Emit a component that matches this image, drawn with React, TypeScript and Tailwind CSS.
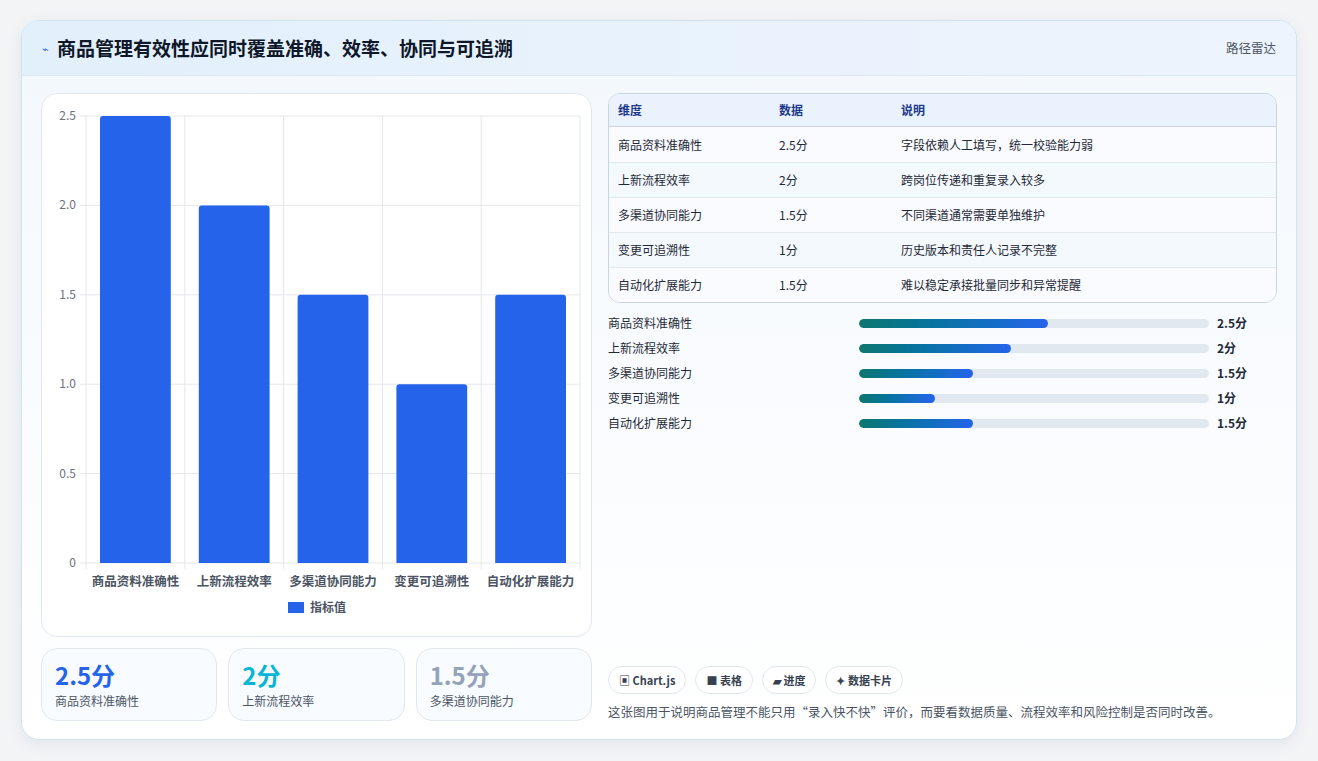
import React from "react";

const data = [
  { name: "商品资料准确性", v: 2.5, s: "2.5分", note: "字段依赖人工填写，统一校验能力弱" },
  { name: "上新流程效率", v: 2, s: "2分", note: "跨岗位传递和重复录入较多" },
  { name: "多渠道协同能力", v: 1.5, s: "1.5分", note: "不同渠道通常需要单独维护" },
  { name: "变更可追溯性", v: 1, s: "1分", note: "历史版本和责任人记录不完整" },
  { name: "自动化扩展能力", v: 1.5, s: "1.5分", note: "难以稳定承接批量同步和异常提醒" },
];

const font = { fontFamily: '"Noto Sans CJK SC", "Noto Sans", sans-serif' };

function Chart() {
  const x0 = 44, w = 494, top = 22, bot = 469;
  const cw = w / 5;
  const ticks = [0, 0.5, 1, 1.5, 2, 2.5];
  const y = (v: number) => bot - (v / 2.5) * (bot - top);
  return (
    <svg width="550" height="543" className="block">
      {ticks.map((t) => (
        <g key={t}>
          <line x1={x0 - 6} x2={x0 + w} y1={y(t)} y2={y(t)} stroke="#e5e7eb" />
          <text x={x0 - 10} y={y(t) + 4} textAnchor="end" fontSize="12" fill="#6b7280">{t === 0 ? "0" : t.toFixed(1)}</text>
        </g>
      ))}
      {[0, 1, 2, 3, 4, 5].map((i) => (
        <line key={i} x1={x0 + i * cw} x2={x0 + i * cw} y1={top} y2={bot + 6} stroke="#e5e7eb" />
      ))}
      {data.map((d, i) => (
        <g key={d.name}>
          <path
            d={`M${x0 + i * cw + 14} ${bot} V${y(d.v) + 3} q0 -3 3 -3 H${x0 + i * cw + cw - 17} q3 0 3 3 V${bot} Z`}
            fill="#2563eb"
          />
          <text x={x0 + i * cw + cw / 2} y={bot + 23} textAnchor="middle" fontSize="12.5" fontWeight="600" fill="#4b5563">{d.name}</text>
        </g>
      ))}
      <rect x="246" y="508" width="16" height="11" fill="#2563eb" />
      <text x="268" y="518" fontSize="12" fontWeight="600" fill="#4b5563">指标值</text>
    </svg>
  );
}

export default function App() {
  return (
    <div className="min-h-screen bg-[#f3f4f6] pt-5 px-[21px] pb-5" style={font}>
      <div className="rounded-[18px] border border-[#cfe3f0] bg-gradient-to-b from-[#f3f8fd] to-white overflow-hidden shadow-[0_4px_16px_rgba(30,64,120,0.08)]">
        <div className="h-[55px] flex items-center justify-between px-5 bg-gradient-to-r from-[#e2f0fc] to-[#eef4fd] border-b border-[#dbe8f4]">
          <div className="flex items-center gap-2">
            <span className="text-[#2563eb] text-[11px]">⌁</span>
            <h1 className="text-[19px] font-bold text-[#0f172a]">商品管理有效性应同时覆盖准确、效率、协同与可追溯</h1>
          </div>
          <span className="text-[12.5px] text-[#4b5563]">路径雷达</span>
        </div>
        <div className="flex gap-4 px-[19px] pt-[17px] pb-[18px]">
          <div className="w-[551px] flex flex-col gap-[11px]">
            <div className="h-[544px] rounded-2xl border border-[#e2e8f0] bg-white overflow-hidden">
              <Chart />
            </div>
            <div className="grid grid-cols-3 gap-[11px]">
              {[
                ["2.5分", "商品资料准确性", "text-[#2563eb]"],
                ["2分", "上新流程效率", "text-[#06b6d4]"],
                ["1.5分", "多渠道协同能力", "text-[#94a3b8]"],
              ].map(([a, b, c]) => (
                <div key={b} className="h-[73px] rounded-2xl border border-[#e2e8f0] bg-[#f8fbff] px-[13px] pt-[10px]">
                  <div className={`text-[24px] font-bold leading-8 ${c}`}>{a}</div>
                  <div className="text-[12px] text-[#4b5563] mt-[1px]">{b}</div>
                </div>
              ))}
            </div>
          </div>
          <div className="flex-1 flex flex-col">
            <div className="rounded-xl border border-[#cbd5e1] overflow-hidden bg-[#f8fbfe]">
              <div className="h-[33px] flex items-center text-[12px] font-bold text-[#1e3a8a] bg-[#eaf3fd] border-b border-[#cbd5e1] px-[9px]">
                <span className="w-[161px]">维度</span>
                <span className="w-[122px]">数据</span>
                <span>说明</span>
              </div>
              {data.map((d, i) => (
                <div key={d.name} className={`h-[35px] flex items-center text-[12px] text-[#1f2937] px-[9px] ${i ? "border-t border-[#e2e8f0]" : ""} ${i % 2 ? "bg-[#f4f9fd]" : "bg-[#f9fbfe]"}`}>
                  <span className="w-[161px]">{d.name}</span>
                  <span className="w-[122px]">{d.s}</span>
                  <span>{d.note}</span>
                </div>
              ))}
            </div>
            <div className="flex flex-col gap-[7px] mt-[11px]">
              {data.map((d) => (
                <div key={d.name} className="h-[18px] flex items-center text-[12px] text-[#1f2937]">
                  <span className="w-[251px]">{d.name}</span>
                  <div className="w-[350px] h-[9px] rounded-full bg-[#e2e8f0] overflow-hidden">
                    <div className="h-full rounded-full bg-gradient-to-r from-[#0f766e] to-[#2563eb]" style={{ width: `${(d.v / 4.62) * 100}%` }} />
                  </div>
                  <span className="ml-2 font-bold">{d.s}</span>
                </div>
              ))}
            </div>
            <div className="flex-1" />
            <div className="flex gap-[9px]">
              {["▣ Chart.js", "■ 表格", "▰ 进度", "✦ 数据卡片"].map((t) => (
                <span key={t} className="h-[28px] px-[10px] flex items-center rounded-full border border-[#e2e8f0] bg-white text-[11px] font-bold text-[#374151]">{t}</span>
              ))}
            </div>
            <p className="mt-[9px] text-[12.5px] text-[#4b5563] leading-[18px]">这张图用于说明商品管理不能只用“录入快不快”评价，而要看数据质量、流程效率和风险控制是否同时改善。</p>
          </div>
        </div>
      </div>
    </div>
  );
}
